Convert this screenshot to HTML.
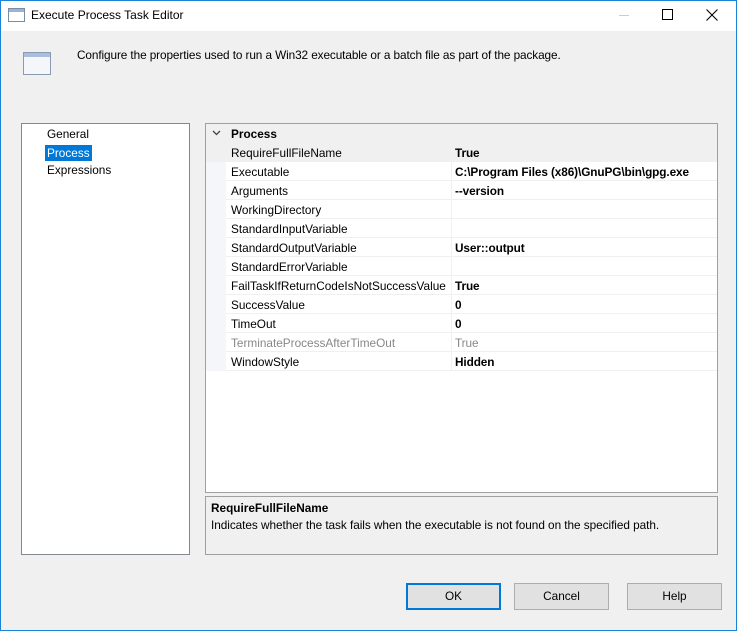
<!DOCTYPE html>
<html><head><style>
*{margin:0;padding:0;box-sizing:border-box}
body{width:737px;height:631px;background:#f0f0f0;font-family:"Liberation Sans",sans-serif;font-size:11.8px;color:#000;position:relative;overflow:hidden}
.win{position:absolute;left:0;top:0;width:737px;height:631px;border:1px solid #1883d7}
.title{position:absolute;left:1px;top:1px;width:735px;height:30px;background:#fff}
.abs{position:absolute;white-space:nowrap}
.list{position:absolute;left:21px;top:123px;width:169px;height:432px;background:#fff;border:1px solid #828790}
.grid{position:absolute;left:205px;top:123px;width:513px;height:370px;background:#fff;border:1px solid #a0a0a0}
.row{position:absolute;left:0;width:511px;height:19px;border-bottom:1px solid #f0f0f0}
.gut{position:absolute;left:0;top:0;width:20px;height:19px;background:#f4f6f9}
.n{position:absolute;left:25px;top:3px}
.v{position:absolute;left:249px;top:3px;font-weight:bold;letter-spacing:-0.1px}
.sep{position:absolute;left:245px;top:0;width:1px;height:19px;background:#f0f0f0}
.desc{position:absolute;left:205px;top:496px;width:513px;height:59px;border:1px solid #a0a0a0;background:#f0f0f0}
.btn{position:absolute;top:583px;width:95px;height:27px;background:#e1e1e1;border:1px solid #adadad;text-align:center;line-height:25px}
</style></head><body>
<div class="win"></div>
<div class="title"></div>
<svg class="abs" style="left:8px;top:8px" width="17" height="14"><rect x="0.5" y="0.5" width="16" height="13" fill="#fff" stroke="#7a8ba4"/><rect x="1" y="1" width="15" height="3" fill="#9ab4d8"/></svg>
<div class="abs" style="left:31px;top:8px;font-size:12px">Execute Process Task Editor</div>
<div class="abs" style="left:619px;top:15px;width:10px;height:1px;background:#ccc"></div>
<div class="abs" style="left:662px;top:9px;width:11px;height:11px;border:1px solid #000"></div>
<svg class="abs" style="left:706px;top:9px" width="12" height="12"><path d="M0.5 0.5L11.5 11.5M11.5 0.5L0.5 11.5" stroke="#000" stroke-width="1.1"/></svg>
<svg class="abs" style="left:23px;top:52px" width="28" height="24"><rect x="0.5" y="0.5" width="27" height="22" fill="#f4f6fa" stroke="#8a9ab0"/><rect x="1" y="1" width="26" height="4" fill="#a8bedc"/></svg>
<div class="abs" style="left:77px;top:48px;letter-spacing:-0.1px">Configure the properties used to run a Win32 executable or a batch file as part of the package.</div>
<div class="list">
<div class="abs" style="left:25px;top:3px">General</div>
<div class="abs" style="left:23px;top:21px;background:#0078d7;color:#fff;padding:1px 2px">Process</div>
<div class="abs" style="left:25px;top:39px">Expressions</div>
</div>
<div class="grid">
<div class="row" style="top:0;background:#f0f0f0;border:none;width:511px"><svg class="abs" style="left:6px;top:6px" width="9" height="6"><path d="M1 1L4.5 4.5L8 1" stroke="#444" fill="none" stroke-width="1.3"/></svg><div class="n" style="font-weight:bold">Process</div></div>
<div class="row" style="top:19px;background:#f0f0f0"><div class="n">RequireFullFileName</div><div class="v">True</div></div>
<div class="row" style="top:38px"><div class="gut"></div><div class="sep"></div><div class="n">Executable</div><div class="v">C:\Program Files (x86)\GnuPG\bin\gpg.exe</div></div>
<div class="row" style="top:57px"><div class="gut"></div><div class="sep"></div><div class="n">Arguments</div><div class="v">--version</div></div>
<div class="row" style="top:76px"><div class="gut"></div><div class="sep"></div><div class="n">WorkingDirectory</div></div>
<div class="row" style="top:95px"><div class="gut"></div><div class="sep"></div><div class="n">StandardInputVariable</div></div>
<div class="row" style="top:114px"><div class="gut"></div><div class="sep"></div><div class="n">StandardOutputVariable</div><div class="v">User::output</div></div>
<div class="row" style="top:133px"><div class="gut"></div><div class="sep"></div><div class="n">StandardErrorVariable</div></div>
<div class="row" style="top:152px"><div class="gut"></div><div class="sep"></div><div class="n">FailTaskIfReturnCodeIsNotSuccessValue</div><div class="v">True</div></div>
<div class="row" style="top:171px"><div class="gut"></div><div class="sep"></div><div class="n">SuccessValue</div><div class="v">0</div></div>
<div class="row" style="top:190px"><div class="gut"></div><div class="sep"></div><div class="n">TimeOut</div><div class="v">0</div></div>
<div class="row" style="top:209px;color:#888"><div class="gut"></div><div class="sep"></div><div class="n">TerminateProcessAfterTimeOut</div><div class="v" style="font-weight:normal">True</div></div>
<div class="row" style="top:228px"><div class="gut"></div><div class="sep"></div><div class="n">WindowStyle</div><div class="v">Hidden</div></div>
</div>
<div class="desc">
<div class="abs" style="left:5px;top:4px;font-weight:bold">RequireFullFileName</div>
<div class="abs" style="left:5px;top:21px;letter-spacing:-0.05px">Indicates whether the task fails when the executable is not found on the specified path.</div>
</div>
<div class="btn" style="left:406px;border:2px solid #0078d7;line-height:23px">OK</div>
<div class="btn" style="left:514px">Cancel</div>
<div class="btn" style="left:627px">Help</div>
</body></html>
